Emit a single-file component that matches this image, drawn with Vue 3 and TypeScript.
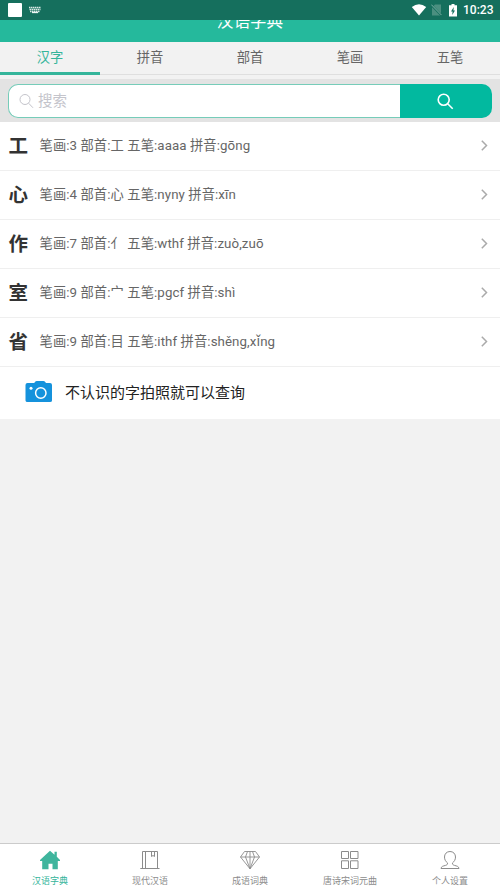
<script setup lang="ts">
interface Entry {
  char: string
  strokes: number
  radical: string
  wubi: string
  pinyin: string
}

const tabs: string[] = ['汉字', '拼音', '部首', '笔画', '五笔']

const entries: Entry[] = [
  { char: '工', strokes: 3, radical: '工', wubi: 'aaaa', pinyin: 'gōng' },
  { char: '心', strokes: 4, radical: '心', wubi: 'nyny', pinyin: 'xīn' },
  { char: '作', strokes: 7, radical: '亻', wubi: 'wthf', pinyin: 'zuò,zuō' },
  { char: '室', strokes: 9, radical: '宀', wubi: 'pgcf', pinyin: 'shì' },
  { char: '省', strokes: 9, radical: '目', wubi: 'ithf', pinyin: 'shěng,xǐng' },
]
</script>

<template>
  <div class="screen">
    <div class="status">
      <span class="square"></span>
      <svg class="keyboard" width="14" height="8" viewBox="0 0 14 8">
        <path d="M1 1.500h12M1.500 3.500h11M2 5.500h10" stroke="#d9e9e5" stroke-width="1.400" stroke-dasharray="1.500 .5" fill="none" />
        <path d="M4 6.500h6" stroke="#eef6f4" stroke-width="1.300" />
      </svg>
      <span class="grow"></span>
      <svg class="wifi" width="16" height="12" viewBox="0 0 16 12">
        <path d="M.8 3Q8-2.500 15.200 3L8 11.500Z" fill="#fff" />
      </svg>
      <svg class="sim" width="11" height="12" viewBox="0 0 11 12">
        <path d="M4 .5h6v11H1v-8Z" fill="#4b8f80" />
        <path d="M.3 1l10.200 10.500" stroke="#156f5d" stroke-width="2" />
        <path d="M.3 .6l10.200 10.500" stroke="#7fb0a5" stroke-width="1" />
      </svg>
      <svg class="battery" width="8" height="13" viewBox="0 0 8 13">
        <path d="M2.500 0h3v1.300H8V12.500H0V1.300h2.500Z" fill="#fff" />
        <path d="M4.800 3L2 7.400h1.600L3.200 11 6 6.500H4.400Z" fill="#156f5d" />
      </svg>
      <span class="clock">10:23</span>
    </div>

    <header class="header"><span class="title">汉语字典</span></header>

    <nav class="tabs">
      <div v-for="(tab, i) in tabs" :key="tab" class="tab" :class="{ active: i === 0 }">{{ tab }}</div>
    </nav>

    <div class="search">
      <div class="field">
        <svg width="15" height="15" viewBox="0 0 15 15" fill="none" stroke="#c4c4cb" stroke-width="1">
          <circle cx="6" cy="5.500" r="5" />
          <path d="M9.600 9.200L14 13.800" />
        </svg>
        <span class="hint">搜索</span>
      </div>
      <div class="go">
        <svg width="17" height="17" viewBox="0 0 17 17" fill="none" stroke="#fff" stroke-width="1.600">
          <circle cx="6.700" cy="6.700" r="5.500" />
          <path d="M10.700 10.700l5 5" />
        </svg>
      </div>
    </div>

    <main class="list">
      <div v-for="entry in entries" :key="entry.char" class="row">
        <span class="char">{{ entry.char }}</span>
        <span class="detail">笔画:{{ entry.strokes }} 部首:{{ entry.radical }} 五笔:{{ entry.wubi }} 拼音:{{ entry.pinyin }}</span>
        <svg class="chevron" width="7" height="11" viewBox="0 0 7 11" fill="none" stroke="#aaa" stroke-width="1.500">
          <path d="M.8 .8L5.500 5.500.8 10.200" />
        </svg>
      </div>
      <div class="photo">
        <svg width="27" height="22" viewBox="0 0 27 22">
          <path d="M2.500 2h6.700l1.200-1.400Q10.900 0 11.700 0h6.800q.8 0 1.300.6L21 2h4q2 0 2 2v15.500q0 1.500-2 1.500H2.500q-2 0-2-1.500V4q0-2 2-2Z" fill="#1592dc" />
          <circle cx="15.800" cy="12" r="5.200" fill="none" stroke="#fff" stroke-width="1.500" />
          <circle cx="6" cy="7.300" r="1.500" fill="#fff" />
        </svg>
        <span class="prompt">不认识的字拍照就可以查询</span>
      </div>
    </main>

    <footer class="bottom">
      <div class="item current">
        <svg width="20" height="20" viewBox="0 0 20 20">
          <path d="M10 .7l4.500 4V1.700h2.300v5L20 10v1h-2.200v8.300h-5.300v-5.500h-4v5.500H2.200V11H0v-1Z" fill="#3fb59d" />
        </svg>
        <span>汉语字典</span>
      </div>
      <div class="item">
        <svg width="20" height="20" viewBox="0 0 20 20" fill="none" stroke="#8c8c8c">
          <path d="M.3 18.500h19.200M2.500 18.500V1.500h15v17M5.500 1.500v17M11.500 1.500v5l1.500-1 1.500 1v-5" />
        </svg>
        <span>现代汉语</span>
      </div>
      <div class="item">
        <svg width="20" height="20" viewBox="0 0 20 20" fill="none" stroke="#8c8c8c" stroke-width=".9">
          <path d="M4.500 1.500h11l4 5.500L10 18.800.5 7ZM.5 7h19M7.500 1.500L5.500 7l4.500 11.800L14.500 7l-2-5.500M10 1.500v17.300" />
        </svg>
        <span>成语词典</span>
      </div>
      <div class="item">
        <svg width="20" height="20" viewBox="0 0 20 20" fill="none" stroke="#8c8c8c">
          <path d="M1.500 1.500h7v7h-7ZM10.500 1.500h7.500v7h-7.500ZM1.500 10.800h7v7.700h-7ZM10.500 10.800h7.500v7.700h-7.500Z" />
        </svg>
        <span>唐诗宋词元曲</span>
      </div>
      <div class="item">
        <svg width="20" height="20" viewBox="0 0 20 20" fill="none" stroke="#8c8c8c">
          <path d="M10 1.500C6.700 1.500 4.500 3.900 4.500 7c0 2.600 1.200 4.500 3 5.900.2 1.600-.5 2-2 2.500-2.400.7-4.200.9-4.500 3.100h18c-.3-2.200-2.100-2.400-4.500-3.100-1.500-.5-2.200-.9-2-2.500 1.800-1.400 3-3.300 3-5.900 0-3.100-2.200-5.500-5.500-5.500Z" />
        </svg>
        <span>个人设置</span>
      </div>
    </footer>
  </div>
</template>

<style>
body {
  margin: 0;
}
</style>

<style scoped>
.screen {
  display: flex;
  flex-direction: column;
  width: 500px;
  height: 890px;
  overflow: hidden;
  background: #f2f2f2;
  font-family: Roboto, 'Noto Sans CJK SC', sans-serif;
  white-space: nowrap;
}
svg {
  display: block;
  flex: none;
}
.status {
  display: flex;
  flex: none;
  align-items: center;
  box-sizing: border-box;
  height: 20px;
  padding: 0 7px 0 8px;
  background: #156f5d;
}
.square {
  width: 14px;
  height: 14px;
  border-radius: 1px;
  background: #fff;
}
.keyboard {
  margin-left: 6px;
}
.grow {
  flex: 1;
}
.sim {
  margin-left: 4px;
}
.battery {
  margin-left: 7px;
}
.clock {
  width: 30px;
  margin-left: 6px;
  color: #fff;
  font-size: 12px;
  font-weight: 500;
  line-height: 20px;
}
.header {
  display: flex;
  flex: none;
  align-items: flex-end;
  justify-content: center;
  height: 22px;
  overflow: hidden;
  background: #25b99c;
}
.title {
  padding-bottom: 7px;
  color: #fff;
  font-size: 16.600px;
  line-height: 26px;
}
.tabs {
  display: flex;
  flex: none;
  box-sizing: border-box;
  height: 33px;
  border-bottom: 1px solid #dfdfdf;
}
.tab {
  flex: 1;
  box-sizing: border-box;
  height: 33px;
  color: #666;
  font-size: 13.300px;
  line-height: 32px;
  text-align: center;
}
.tab.active {
  border-bottom: 3px solid #35b59b;
  color: #35b59b;
}
.search {
  display: flex;
  flex: none;
  box-sizing: border-box;
  height: 43px;
  margin-top: 4px;
  padding: 5px 8px 4px;
  background: #e3e3e3;
}
.field {
  display: flex;
  flex: 1;
  align-items: center;
  gap: 4px;
  padding-left: 10px;
  border: 1px solid #76ccb9;
  border-right: 0;
  border-radius: 10px 0 0 10px;
  background: #fff;
}
.hint {
  padding-bottom: 3px;
  color: #c4c4cb;
  font-size: 14.500px;
}
.go {
  display: flex;
  align-items: center;
  justify-content: center;
  box-sizing: border-box;
  width: 92px;
  padding-right: 1px;
  border-radius: 0 10px 10px 0;
  background: #02b99f;
}
.list {
  flex: none;
  background: #fff;
}
.row {
  display: flex;
  align-items: center;
  box-sizing: border-box;
  height: 49px;
  padding: 0 12px 0 8.500px;
  border-bottom: 1px solid #efefef;
}
.char {
  width: 31px;
  padding-top: 2px;
  color: #333;
  font-size: 19.500px;
  font-weight: 700;
  line-height: 46px;
}
.detail {
  flex: 1;
  color: #666;
  font-size: 13.300px;
  letter-spacing: 0.080px;
  line-height: 48px;
}
.chevron {
  padding-bottom: 1px;
}
.photo {
  display: flex;
  align-items: center;
  gap: 13px;
  box-sizing: border-box;
  height: 52px;
  padding: 0 0 2px 25px;
  color: #222;
  font-size: 15px;
}
.prompt {
  padding-bottom: 1px;
}
.bottom {
  display: flex;
  flex: none;
  box-sizing: border-box;
  height: 47px;
  margin-top: auto;
  border-top: 1px solid #cbcbcb;
  background: #fff;
}
.item {
  display: flex;
  flex: 1;
  flex-direction: column;
  align-items: center;
  gap: 4px;
  padding-top: 6px;
  color: #8c8c8c;
  font-size: 9px;
  line-height: 14px;
}
.item.current {
  color: #35b59b;
}
</style>
